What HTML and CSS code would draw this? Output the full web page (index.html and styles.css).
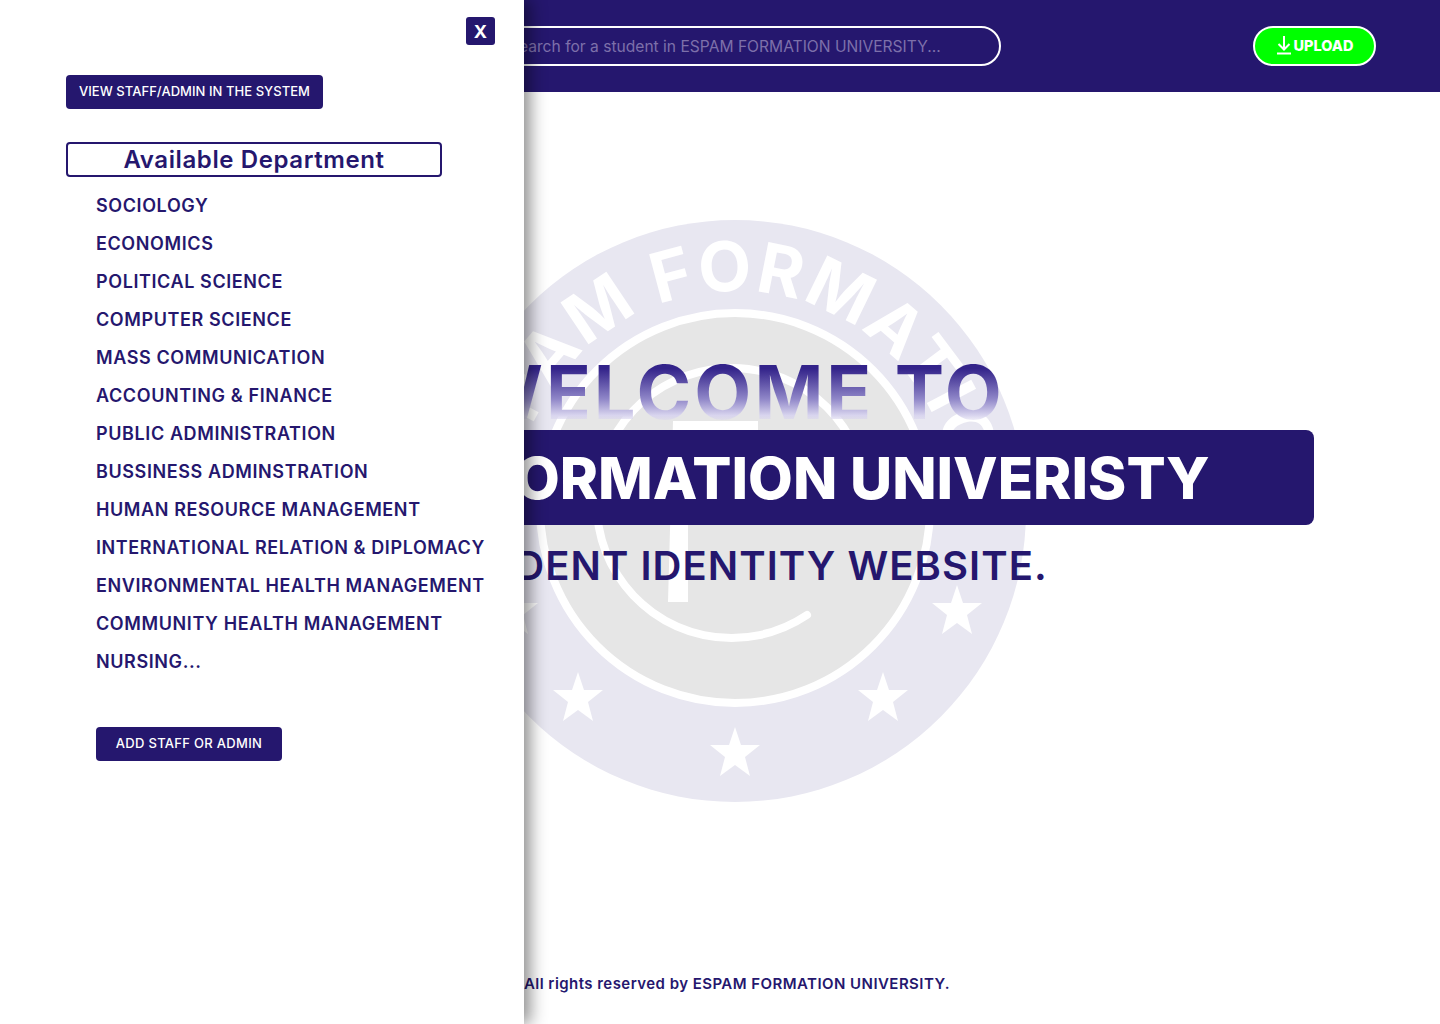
FILE: index.html
```html
<!DOCTYPE html>
<html lang="en">
<head>
    <meta charset="UTF-8">
    <meta name="viewport" content="width=device-width, initial-scale=1.0">
    <title>ESPAM Formation University - Student Identity</title>
    <link rel="stylesheet" href="styles.css">
</head>
<body>
    <!-- Side menu, open over the page -->
    <aside class="sidebar">
        <button class="close-btn">X</button>
        <button class="btn staff-btn">VIEW STAFF/ADMIN IN THE SYSTEM</button>
        <h2 class="dept-title">Available Department</h2>
        <ul class="dept-list">
            <li>SOCIOLOGY</li>
            <li>ECONOMICS</li>
            <li>POLITICAL SCIENCE</li>
            <li>COMPUTER SCIENCE</li>
            <li>MASS COMMUNICATION</li>
            <li>ACCOUNTING &amp; FINANCE</li>
            <li>PUBLIC ADMINISTRATION</li>
            <li>BUSSINESS ADMINSTRATION</li>
            <li>HUMAN RESOURCE MANAGEMENT</li>
            <li>INTERNATIONAL RELATION &amp; DIPLOMACY</li>
            <li>ENVIRONMENTAL HEALTH MANAGEMENT</li>
            <li>COMMUNITY HEALTH MANAGEMENT</li>
            <li>NURSING...</li>
        </ul>
        <button class="btn add-btn">ADD STAFF OR ADMIN</button>
    </aside>

    <header class="navbar">
        <input class="search" type="text" placeholder="Search for a student in ESPAM FORMATION UNIVERSITY...">
        <button class="upload-btn">
            <svg width="16" height="19" viewBox="0 0 16 19" fill="none" stroke="#fff" stroke-width="2">
                <path d="M8 0v13M2.5 8L8 13.5 13.5 8M1 17.5h14"/>
            </svg>
            UPLOAD
        </button>
    </header>

    <main class="hero">
        <!-- Faded school badge behind the welcome text -->
        <svg class="emblem" width="582" height="584" viewBox="444 219 582 584">
            <circle cx="735" cy="511" r="291" fill="#e8e7f1"/>
            <circle cx="735" cy="508" r="195" fill="#e6e6e6" stroke="#fff" stroke-width="8"/>
            <path d="M807 615A135 135 0 1 1 850 438" fill="none" stroke="#fff" stroke-width="8" stroke-linecap="round"/>
            <path d="M673 421h85v12h-70v169h-20z" fill="#fff"/>
            <path id="badge-arc" d="M735 731A220 220 0 1 1 735 291A220 220 0 1 1 735 731" fill="none"/>
            <text class="emblem-text"><textPath href="#badge-arc" startOffset="342">ESPAM FORMATION</textPath></text>
            <g fill="#fff">
                <polygon id="star" points="578,672 584,690 603,690 588,702 593,721 578,710 563,721 568,702 553,690 572,690"/>
                <use href="#star" x="157" y="55"/>
                <use href="#star" x="305"/>
                <use href="#star" x="379" y="-87"/>
                <use href="#star" x="-65" y="-87"/>
            </g>
        </svg>
        <h1 class="welcome">WELCOME TO</h1>
        <div class="band">ESPAM FORMATION UNIVERISTY</div>
        <p class="subtitle">STUDENT IDENTITY WEBSITE.</p>
    </main>

    <footer class="footer">All rights reserved by ESPAM FORMATION UNIVERSITY.</footer>
</body>
</html>
```

FILE: styles.css
```css
* {
    box-sizing: border-box;
}
body {
    margin: 0;
    height: 1024px;
    overflow: hidden;
    display: flex;
    flex-direction: column;
    font-family: Inter, "Liberation Sans", sans-serif;
    color: #25176e;
    background-color: #fff;
}
button {
    font-family: inherit;
    border: none;
    cursor: pointer;
}

/* side menu */
.sidebar {
    position: absolute;
    top: 0;
    left: 0;
    z-index: 2;
    width: 524px;
    height: 1024px;
    padding: 17px 29px 0 66px;
    display: flex;
    flex-direction: column;
    align-items: flex-start;
    background-color: #fff;
    box-shadow: 6px 0 16px rgba(0, 0, 0, 0.45);
}
.close-btn {
    align-self: flex-end;
    width: 29px;
    height: 28px;
    padding: 0;
    border-radius: 3px;
    background-color: #25176e;
    color: #fff;
    font-size: 18px;
    font-weight: 700;
}
.btn {
    height: 34px;
    padding: 0 0 2px;
    border-radius: 4px;
    background-color: #25176e;
    color: #fff;
    font-size: 13px;
    font-weight: 500;
    white-space: nowrap;
}
.staff-btn {
    width: 257px;
    margin-top: 30px;
    letter-spacing: 0.05px;
}
.dept-title {
    width: 376px;
    height: 35px;
    margin: 33px 0 0;
    border: 2px solid #25176e;
    border-radius: 4px;
    font-size: 24px;
    font-weight: 600;
    line-height: 31px;
    letter-spacing: 0.6px;
    text-align: center;
}
.dept-list {
    list-style: none;
    margin: 9px 0 0 30px;
    padding: 1px 0 0;
}
.dept-list li {
    height: 38px;
    font-size: 18px;
    font-weight: 600;
    line-height: 38px;
    white-space: nowrap;
    letter-spacing: 0.6px;
}
.add-btn {
    width: 186px;
    margin: 46px 0 0 30px;
    letter-spacing: 0.3px;
}

/* top bar */
.navbar {
    flex: none;
    height: 92px;
    padding: 0 64px 0 481px;
    display: flex;
    align-items: center;
    justify-content: space-between;
    background-color: #25176e;
}
.search {
    width: 520px;
    height: 40px;
    padding: 0 24px 0 26px;
    border: 2px solid #fff;
    border-radius: 20px;
    background: transparent;
    font-family: inherit;
    font-size: 15.6px;
    color: #fff;
}
.search::placeholder {
    color: #7d70aa;
    opacity: 1;
}
.upload-btn {
    width: 123px;
    height: 40px;
    padding: 0 0 1px;
    display: flex;
    align-items: center;
    justify-content: center;
    gap: 2px;
    border: 2px solid #fff;
    border-radius: 20px;
    background-color: #00ff00;
    color: #fff;
    font-size: 14.5px;
    font-weight: 800;
}

/* welcome block */
.hero {
    position: relative;
    flex: 1;
    padding-top: 256px;
    text-align: center;
}
.emblem {
    position: absolute;
    top: 127px;
    left: 444px;
    filter: blur(0.6px);
}
.emblem-text {
    font-size: 69px;
    font-weight: 700;
    letter-spacing: 2px;
    fill: #fff;
}
.welcome,
.band,
.subtitle {
    position: relative;
    margin: 0;
}
.welcome {
    height: 82px;
    padding-left: 31px;
    font-size: 74px;
    font-weight: 700;
    line-height: 88px;
    letter-spacing: 3px;
    background: linear-gradient(180deg, #33238a 25%, #8f86c8 62%, #d8d4ee 82%, rgba(255, 255, 255, 0) 92%);
    -webkit-background-clip: text;
    background-clip: text;
    color: transparent;
}
.band {
    width: 1188px;
    height: 95px;
    margin: 0 auto;
    padding-left: 32px;
    border-radius: 8px;
    background-color: #25176e;
    color: #fff;
    font-size: 58px;
    font-weight: 800;
    line-height: 97px;
}
.subtitle {
    margin-top: 14px;
    padding-left: 38px;
    font-size: 40px;
    font-weight: 600;
    line-height: 54px;
    letter-spacing: 1.05px;
}

.footer {
    flex: none;
    height: 64px;
    padding-left: 524px;
    font-size: 15px;
    font-weight: 600;
    line-height: 48px;
    letter-spacing: 0.45px;
}
```
